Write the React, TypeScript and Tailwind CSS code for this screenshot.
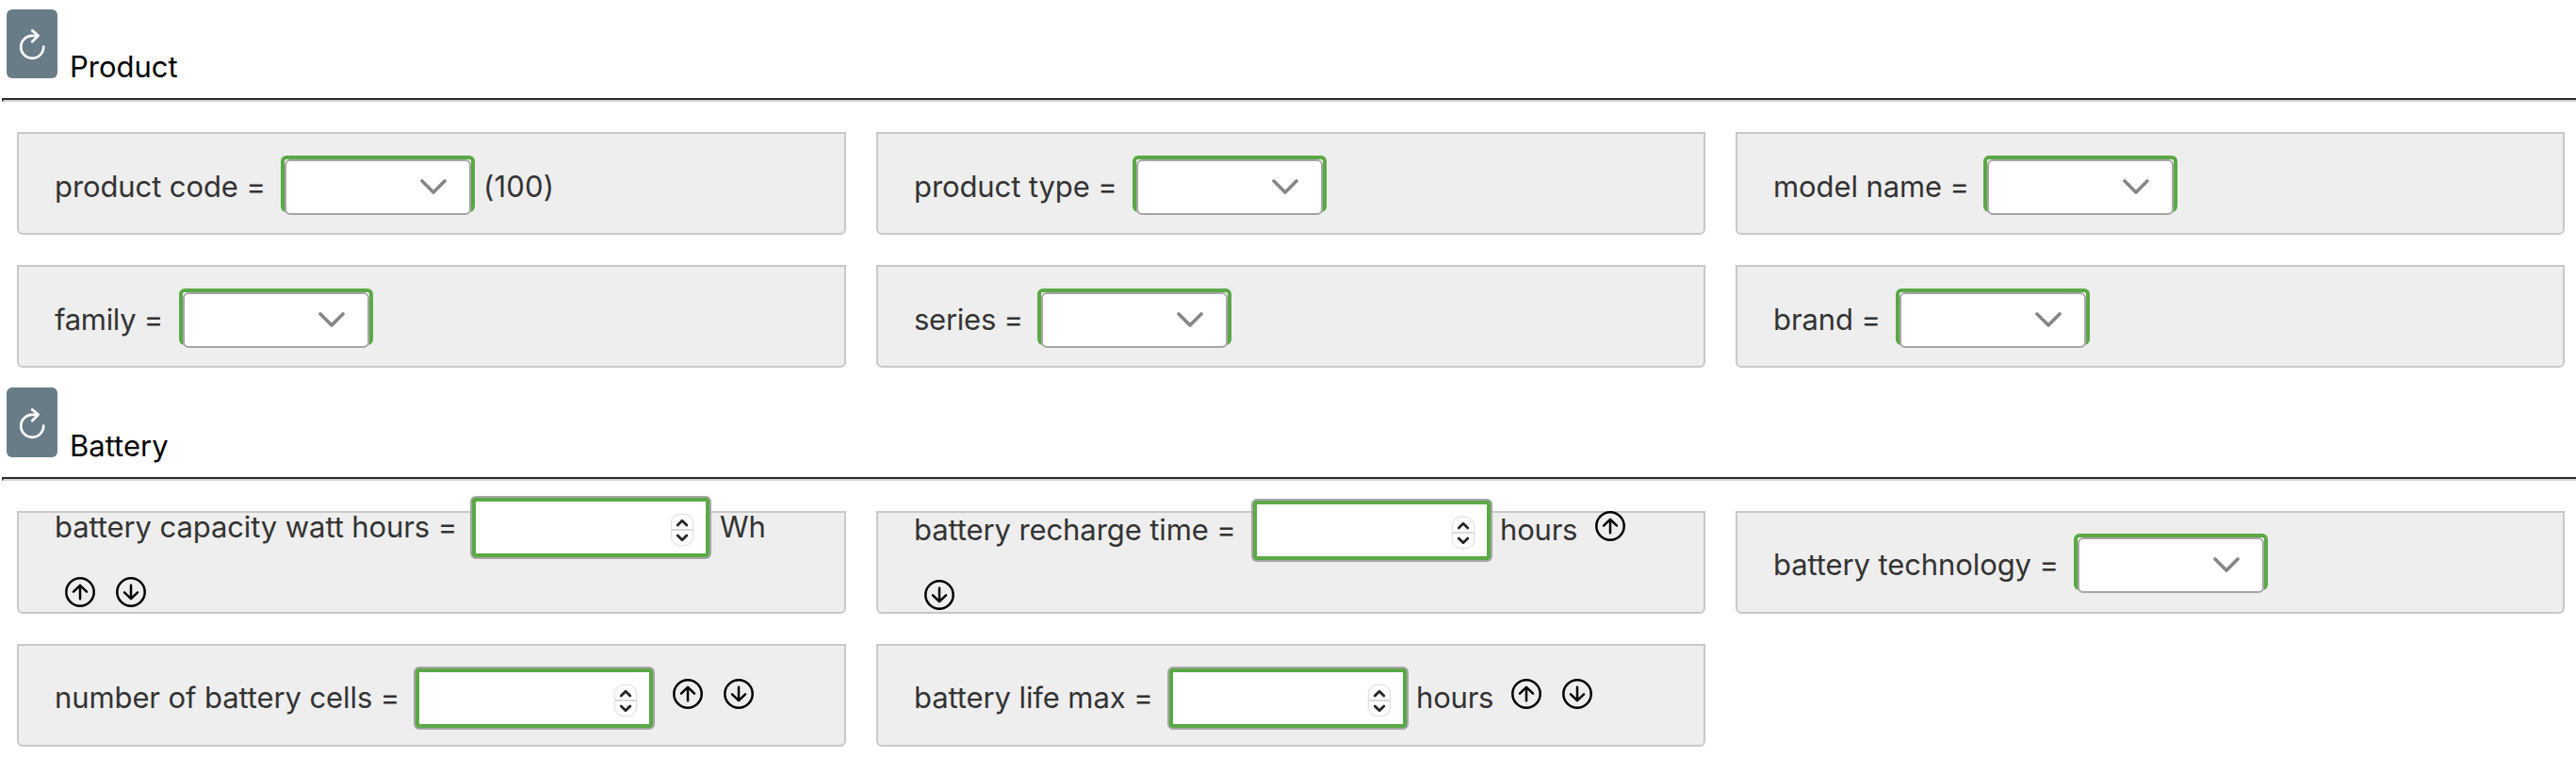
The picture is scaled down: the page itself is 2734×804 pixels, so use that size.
import React from "react";

type Field = {
  label: string;
  width: string;
  kind: "select" | "number";
  top: string;
  suffix?: string;
  suffixStyle?: string;
  inlineArrows?: ("up" | "down")[];
  wrappedArrows?: ("up" | "down")[];
};

const productFields: Field[] = [
  { label: "product code =", width: "w-[240px]", kind: "select", top: "mt-[23px]", suffix: "(100)", suffixStyle: "ml-[9px] tracking-[0.2px]" },
  { label: "product type =", width: "w-[232px]", kind: "select", top: "mt-[23px]" },
  { label: "model name =", width: "w-[223px]", kind: "select", top: "mt-[23px]" },
  { label: "family =", width: "w-[132px] tracking-[-0.3px]", kind: "select", top: "mt-[23px]" },
  { label: "series =", width: "w-[131px] tracking-[-0.25px]", kind: "select", top: "mt-[23px]" },
  { label: "brand =", width: "w-[130px]", kind: "select", top: "mt-[23px]" },
];

const batteryFields: Field[] = [
  {
    label: "battery capacity watt hours =",
    width: "w-[441px]",
    kind: "number",
    top: "-mt-[18px]",
    suffix: "Wh",
    suffixStyle: "ml-[9px]",
    wrappedArrows: ["up", "down"],
  },
  {
    label: "battery recharge time =",
    width: "w-[358px]",
    kind: "number",
    top: "-mt-[15px]",
    suffix: "hours",
    suffixStyle: "ml-[8px] tracking-[-0.2px]",
    inlineArrows: ["up"],
    wrappedArrows: ["down"],
  },
  { label: "battery technology =", width: "w-[319px]", kind: "select", top: "mt-[22px]" },
  {
    label: "number of battery cells =",
    width: "w-[381px]",
    kind: "number",
    top: "mt-[22px]",
    inlineArrows: ["up", "down"],
  },
  {
    label: "battery life max =",
    width: "w-[269px]",
    kind: "number",
    top: "mt-[22px]",
    suffix: "hours",
    suffixStyle: "ml-[8px] tracking-[-0.2px]",
    inlineArrows: ["up", "down"],
  },
];

function RefreshIcon() {
  return (
    <svg width="30" height="34" viewBox="0 0 30 34" fill="none" stroke="white" strokeWidth="2.7" strokeLinecap="round" strokeLinejoin="round">
      <path d="M27.2 19.6A12 12 0 1 1 15.2 7.8H20.6" />
      <path d="M15.2 2.4L21.6 7.8L15.2 14.2" />
    </svg>
  );
}

function CircleArrow({ direction }: { direction: "up" | "down" }) {
  return (
    <svg width="32" height="32" viewBox="0 0 32 32" fill="none" stroke="black" strokeWidth="2.5" strokeLinecap="round" strokeLinejoin="round" className="shrink-0">
      <circle cx="16" cy="16" r="14.7" />
      {direction === "up" ? (
        <path d="M16 23.3V9M9 15.6L16 8.8L23 15.6" />
      ) : (
        <path d="M16 8.7V23M9 16.4L16 23.2L23 16.4" />
      )}
    </svg>
  );
}

function Select() {
  return (
    <div className="h-[60px] w-[206px] shrink-0 rounded-[6px] border-x-4 border-t-4 border-[#5aa846] bg-white">
      <div className="flex h-[59px] w-[198px] items-start justify-end rounded-[6px] border-2 border-[#a6a6a6] bg-white pt-[19px] pr-[24px]">
        <svg width="28" height="16" viewBox="0 0 28 16" fill="none" stroke="#868686" strokeWidth="3.6" strokeLinecap="round" strokeLinejoin="round">
          <path d="M2 2L14 14L26 2" />
        </svg>
      </div>
    </div>
  );
}

function NumberInput() {
  return (
    <div className="flex h-[67px] w-[256px] shrink-0 rounded-[6px] border-2 border-[#a6a6a6] bg-[#5aa846] p-1">
      <div className="flex flex-1 items-start justify-end bg-white pt-[13px] pr-[13px]">
        <div className="flex h-[34px] w-6 flex-col rounded-[10px] border border-[#e2e2e2] bg-white shadow-[0_0_2px_rgba(0,0,0,0.12)]">
          <div className="flex h-[17px] items-center justify-center border-b-2 border-[#d9d9d9] pt-[2px]">
            <svg width="14" height="9" viewBox="0 0 14 9" fill="none" stroke="#262626" strokeWidth="2.8" strokeLinecap="round" strokeLinejoin="round">
              <path d="M2.2 6.9L7 2.2L11.8 6.9" />
            </svg>
          </div>
          <div className="flex h-[15px] items-center justify-center">
            <svg width="14" height="9" viewBox="0 0 14 9" fill="none" stroke="#262626" strokeWidth="2.8" strokeLinecap="round" strokeLinejoin="round">
              <path d="M2.2 2.1L7 6.8L11.8 2.1" />
            </svg>
          </div>
        </div>
      </div>
    </div>
  );
}

function FieldCard({ field }: { field: Field }) {
  return (
    <div className="h-[109px] rounded-b-[6px] border-2 border-[#c8c8c8] bg-[#eeeeee]">
      <div className={`${field.top} pl-[38px]`}>
        <div className="flex h-[67px] items-start">
          <span className={`${field.width} mt-[14px] shrink-0 whitespace-nowrap`}>{field.label}</span>
          {field.kind === "select" ? <Select /> : <NumberInput />}
          {field.suffix && <span className={`${field.suffixStyle} mt-[14px] whitespace-nowrap`}>{field.suffix}</span>}
          {field.inlineArrows && (
            <div className="mt-[13px] ml-[19px] flex gap-[22px]">
              {field.inlineArrows.map((direction) => (
                <CircleArrow key={direction} direction={direction} />
              ))}
            </div>
          )}
        </div>
        {field.wrappedArrows && (
          <div className="mt-[19px] ml-[11px] flex gap-[22px]">
            {field.wrappedArrows.map((direction) => (
              <CircleArrow key={direction} direction={direction} />
            ))}
          </div>
        )}
      </div>
    </div>
  );
}

function Section({ title, fields, button }: { title: string; fields: Field[]; button: string }) {
  return (
    <section>
      <header className="flex h-[83px] items-end pl-[7px] text-black">
        <button aria-label={`Reset ${title}`} className={`${button} flex w-[54px] items-end justify-center rounded-[6px] bg-[#687c88] pb-[19px]`}>
          <RefreshIcon />
        </button>
        <h2 className="mb-[-7px] ml-[13px] tracking-normal">{title}</h2>
      </header>
      <div className="mt-[21px] ml-[2px] h-1 border-t-2 border-b-2 border-l-2 border-t-[#2c2c2c] border-b-[#d4d4d4] border-l-[#2c2c2c]" />
      <div className="mt-8 mr-[12px] ml-[18px] grid grid-cols-[880px_880px_880px] gap-8">
        {fields.map((field) => (
          <FieldCard key={field.label} field={field} />
        ))}
      </div>
    </section>
  );
}

export default function App() {
  return (
    <main className="flex h-[804px] w-[2734px] flex-col gap-3 overflow-hidden bg-white font-['Inter',sans-serif] text-[31px] leading-[38px] tracking-[-0.1px] text-[#333333]">
      <Section title="Product" fields={productFields} button="h-[73px]" />
      <Section title="Battery" fields={batteryFields} button="h-[74px]" />
    </main>
  );
}
